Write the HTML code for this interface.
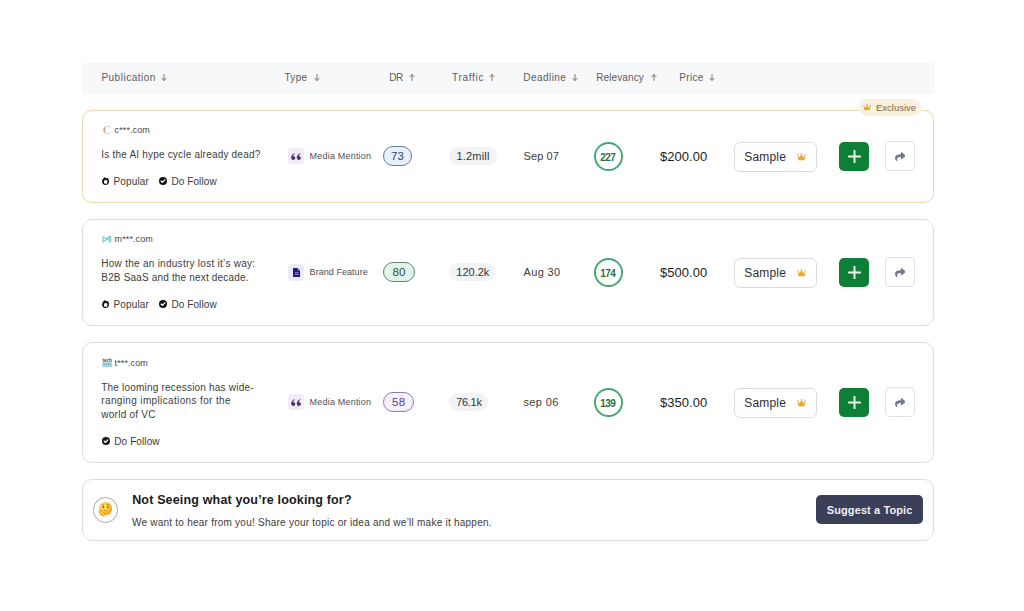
<!DOCTYPE html>
<html><head><meta charset="utf-8"><title>Publications</title>
<style>
html,body{margin:0;padding:0;background:#fff;}
body{width:1024px;height:611px;position:relative;overflow:hidden;font-family:"Liberation Sans",sans-serif;}
.t{position:absolute;white-space:nowrap;line-height:20px;height:20px;}
.b{position:absolute;}
</style></head><body>
<div class="b" style="left:82px;top:62.5px;width:852.5px;height:31px;background:#f7f8fa;border-radius:4px;"></div>
<div class="t" style="left:101.40px;top:68.44px;font-size:10px;color:#5c5c5c;letter-spacing:0.5px;">Publication</div>
<svg class="b" style="left:161.3px;top:74.0px;width:6px;height:7px" viewBox="0 0 6 7"><path d="M3 0.5V6.3M0.8 4.2L3 6.5L5.2 4.2" stroke="#6a6a6a" stroke-width="0.9" fill="none" stroke-linecap="round" stroke-linejoin="round"/></svg>
<div class="t" style="left:284.50px;top:68.44px;font-size:10px;color:#5c5c5c;letter-spacing:0.3px;">Type</div>
<svg class="b" style="left:313.5px;top:74.0px;width:6px;height:7px" viewBox="0 0 6 7"><path d="M3 0.5V6.3M0.8 4.2L3 6.5L5.2 4.2" stroke="#6a6a6a" stroke-width="0.9" fill="none" stroke-linecap="round" stroke-linejoin="round"/></svg>
<div class="t" style="left:389.20px;top:68.44px;font-size:10px;color:#5c5c5c;letter-spacing:-0.4px;">DR</div>
<svg class="b" style="left:408.5px;top:74.0px;width:6px;height:7px" viewBox="0 0 6 7"><path d="M3 6.5V0.7M0.8 2.8L3 0.5L5.2 2.8" stroke="#6a6a6a" stroke-width="0.9" fill="none" stroke-linecap="round" stroke-linejoin="round"/></svg>
<div class="t" style="left:452.00px;top:68.44px;font-size:10px;color:#5c5c5c;letter-spacing:0.7px;">Traffic</div>
<svg class="b" style="left:488.5px;top:74.0px;width:6px;height:7px" viewBox="0 0 6 7"><path d="M3 6.5V0.7M0.8 2.8L3 0.5L5.2 2.8" stroke="#6a6a6a" stroke-width="0.9" fill="none" stroke-linecap="round" stroke-linejoin="round"/></svg>
<div class="t" style="left:523.30px;top:68.44px;font-size:10px;color:#5c5c5c;letter-spacing:0.45px;">Deadline</div>
<svg class="b" style="left:572.3px;top:74.0px;width:6px;height:7px" viewBox="0 0 6 7"><path d="M3 0.5V6.3M0.8 4.2L3 6.5L5.2 4.2" stroke="#6a6a6a" stroke-width="0.9" fill="none" stroke-linecap="round" stroke-linejoin="round"/></svg>
<div class="t" style="left:596.30px;top:68.44px;font-size:10px;color:#5c5c5c;letter-spacing:0.1px;">Relevancy</div>
<svg class="b" style="left:650.8px;top:74.0px;width:6px;height:7px" viewBox="0 0 6 7"><path d="M3 6.5V0.7M0.8 2.8L3 0.5L5.2 2.8" stroke="#6a6a6a" stroke-width="0.9" fill="none" stroke-linecap="round" stroke-linejoin="round"/></svg>
<div class="t" style="left:679.20px;top:68.44px;font-size:10px;color:#5c5c5c;letter-spacing:0.35px;">Price</div>
<svg class="b" style="left:709px;top:74.0px;width:6px;height:7px" viewBox="0 0 6 7"><path d="M3 0.5V6.3M0.8 4.2L3 6.5L5.2 4.2" stroke="#6a6a6a" stroke-width="0.9" fill="none" stroke-linecap="round" stroke-linejoin="round"/></svg>
<div class="b" style="left:82px;top:110px;width:852px;height:93px;border:1px solid #ebdab5;border-radius:10px;box-sizing:border-box;background:#fff;box-shadow:0 0 1.5px rgba(238,222,170,0.6);"></div>
<div class="b" style="left:82px;top:219px;width:852px;height:107px;border:1px solid #dedede;border-radius:10px;box-sizing:border-box;background:#fff;"></div>
<div class="b" style="left:82px;top:342px;width:852px;height:121px;border:1px solid #dedede;border-radius:10px;box-sizing:border-box;background:#fff;"></div>
<div class="b" style="left:82px;top:479px;width:852px;height:62px;border:1px solid #dedede;border-radius:10px;box-sizing:border-box;background:#fff;"></div>
<div class="b" style="left:859px;top:99px;width:61.5px;height:17px;background:#f8f1df;border-radius:9px;"></div>
<svg class="b" style="left:862.8px;top:103.6px;width:8px;height:6.8px" viewBox="0 0 9 7.5"><path d="M0.9 2.2 L2.6 4.2 L4.5 0.8 L6.4 4.2 L8.1 2.2 L7.6 7.3 L1.4 7.3 Z" fill="#e6a935"/><circle cx="0.9" cy="2" r="0.8" fill="#e6a935"/><circle cx="8.1" cy="2" r="0.8" fill="#e6a935"/><circle cx="4.5" cy="0.8" r="0.8" fill="#e6a935"/></svg>
<div class="t" style="left:876.00px;top:98.31px;font-size:9.5px;color:#7b6a45;">Exclusive</div>
<svg class="b" style="left:102.5px;top:125.8px;width:8.4px;height:8.2px" viewBox="0 0 8.4 8.2"><path d="M7.3 1.3 A3.9 3.95 0 1 0 7.3 6.7" stroke="#d8b8a2" stroke-width="0.9" fill="none"/><path d="M2.4 1.6 A3.9 3.95 0 0 0 2.4 6.4" stroke="#cfa48a" stroke-width="1.3" fill="none"/></svg>
<div class="t" style="left:114.60px;top:119.78px;font-size:9px;color:#454545;letter-spacing:0.1px;">c***.com</div>
<div class="t" style="left:101.30px;top:144.84px;font-size:10px;color:#3d3d3d;letter-spacing:0.2px;">Is the AI hype cycle already dead?</div>
<svg class="b" style="left:101.8px;top:177.10000000000002px;width:7.2px;height:8px" viewBox="0 0 7.2 8"><circle cx="3.6" cy="4.4" r="3.5" fill="#111"/><path d="M1.2 2.2 L2.6 0 L4.6 1.6 Z" fill="#111"/><path d="M5.2 1.6 L6.3 0.9 L6.6 2.6 Z" fill="#111"/><circle cx="3.7" cy="4.9" r="1.85" fill="#fff"/></svg>
<div class="t" style="left:113.50px;top:172.14px;font-size:10px;color:#3a3a3a;letter-spacing:0.15px;">Popular</div>
<svg class="b" style="left:158.6px;top:176.8px;width:8px;height:8px" viewBox="0 0 8 8"><circle cx="4" cy="4" r="4" fill="#111"/><path d="M2.1 4.1L3.4 5.3L5.9 2.9" stroke="#fff" stroke-width="1.3" fill="none" stroke-linecap="round" stroke-linejoin="round"/></svg>
<div class="t" style="left:171.40px;top:172.14px;font-size:10px;color:#3a3a3a;letter-spacing:0.1px;">Do Follow</div>
<div class="b" style="left:288px;top:148px;width:16.2px;height:16px;background:#f3ecf8;border-radius:4px;"></div>
<svg class="b" style="left:291.2px;top:152.9px;width:10.2px;height:7px" viewBox="0 0 10.2 7"><path d="M0.2 4.6 C0.2 2.4 1.4 0.9 3.4 0.2 L3.8 1.1 C2.8 1.6 2.2 2.3 2.0 2.9 C3.2 2.9 4.3 3.8 4.3 4.9 C4.3 6.1 3.4 6.9 2.2 6.9 C1.0 6.9 0.2 6 0.2 4.6 Z" fill="#4d3470"/><path d="M0.2 4.6 C0.2 2.4 1.4 0.9 3.4 0.2 L3.8 1.1 C2.8 1.6 2.2 2.3 2.0 2.9 C3.2 2.9 4.3 3.8 4.3 4.9 C4.3 6.1 3.4 6.9 2.2 6.9 C1.0 6.9 0.2 6 0.2 4.6 Z" transform="translate(5.6 0)" fill="#4d3470"/></svg>
<div class="t" style="left:309.60px;top:145.98px;font-size:9px;color:#4f4f4f;letter-spacing:0.2px;">Media Mention</div>
<div class="b" style="left:383.4px;top:146.2px;width:28.2px;height:20.2px;background:#e7f0fb;border:1px solid #6b7b90;border-radius:10px;box-sizing:border-box;"></div>
<div class="t" style="left:297.50px;width:200px;text-align:center;top:146.02px;font-size:11.5px;color:#33435a;letter-spacing:0.2px;">73</div>
<div class="b" style="left:449.3px;top:146.8px;width:47.4px;height:18px;background:#f2f3f4;border-radius:9px;"></div>
<div class="t" style="left:373.00px;width:200px;text-align:center;top:146.09px;font-size:11px;color:#333;letter-spacing:0.2px;">1.2mill</div>
<div class="t" style="left:523.50px;top:146.09px;font-size:11px;color:#3a3a3a;letter-spacing:0.1px;">Sep 07</div>
<svg class="b" style="left:593.5px;top:141.8px;width:29px;height:29px" viewBox="0 0 29 29"><circle cx="14.5" cy="14.5" r="13.55" fill="none" stroke="#46a670" stroke-width="1.9"/></svg>
<div class="t" style="left:507.80px;width:200px;text-align:center;top:148.13px;font-size:10px;color:#2b6e39;font-weight:700;letter-spacing:-0.5px;">227</div>
<div class="t" style="left:660.00px;top:146.80px;font-size:13px;color:#1c1c1c;letter-spacing:0.05px;">$200.00</div>
<div class="b" style="left:733.5px;top:141.5px;width:83.2px;height:30px;border:1px solid #dcdcdc;border-radius:6px;box-sizing:border-box;background:#fff;"></div>
<div class="t" style="left:744.20px;top:146.84px;font-size:12px;color:#2e2e2e;letter-spacing:0.2px;">Sample</div>
<svg class="b" style="left:797px;top:153px;width:9px;height:7.5px" viewBox="0 0 9 7.5"><path d="M0.9 2.2 L2.6 4.2 L4.5 0.8 L6.4 4.2 L8.1 2.2 L7.6 7.3 L1.4 7.3 Z" fill="#e6a935"/><circle cx="0.9" cy="2" r="0.8" fill="#e6a935"/><circle cx="8.1" cy="2" r="0.8" fill="#e6a935"/><circle cx="4.5" cy="0.8" r="0.8" fill="#e6a935"/></svg>
<div class="b" style="left:839.2px;top:141.7px;width:29.6px;height:29.6px;background:#0d7f37;border-radius:5px;"></div>
<svg class="b" style="left:847.5px;top:150px;width:13px;height:13px" viewBox="0 0 13 13"><path d="M6.5 0.8V12.2M0.8 6.5H12.2" stroke="#e8f7ea" stroke-width="2" stroke-linecap="round"/></svg>
<div class="b" style="left:885.2px;top:141.4px;width:29.6px;height:29.8px;border:1px solid #dfdfe4;border-radius:5px;box-sizing:border-box;background:#fff;"></div>
<svg class="b" style="left:894.8px;top:151.7px;width:10.7px;height:9.3px" viewBox="0 31 512 451"><path d="M503.691 189.836L327.687 37.851C312.281 24.546 288 35.347 288 56.015v80.053C127.371 137.907 0 170.1 0 322.326c0 61.441 39.581 122.309 83.333 154.132 13.653 9.931 33.111-2.533 28.077-18.631C66.066 312.814 132.917 274.316 288 272.085V360c0 20.7 24.3 31.453 39.687 18.164l176.004-152c11.071-9.562 11.086-26.753 0-36.328z" fill="#737790"/></svg>
<svg class="b" style="left:102px;top:236.2px;width:9.7px;height:6.6px" viewBox="0 0 9.7 6.6"><rect x="0.3" y="0" width="1.5" height="6.6" rx="0.5" fill="#86dcc4"/><path d="M1.1 0.5 L4.9 3.4 L1.1 6.1" stroke="#79cfc0" stroke-width="1.2" fill="none"/><path d="M4.9 3.4 L7.4 0.6" stroke="#68c2dc" stroke-width="1.5" fill="none"/><rect x="6.6" y="0" width="2.8" height="6.6" rx="0.8" fill="#8ad6d4"/></svg>
<div class="t" style="left:114.60px;top:229.28px;font-size:9px;color:#454545;letter-spacing:0.1px;">m***.com</div>
<div class="t" style="left:101.30px;top:254.34px;font-size:10px;color:#3d3d3d;letter-spacing:0.27px;">How the an industry lost it’s way:</div>
<div class="t" style="left:101.30px;top:267.84px;font-size:10px;color:#3d3d3d;letter-spacing:0.17px;">B2B SaaS and the next decade.</div>
<svg class="b" style="left:101.8px;top:299.90000000000003px;width:7.2px;height:8px" viewBox="0 0 7.2 8"><circle cx="3.6" cy="4.4" r="3.5" fill="#111"/><path d="M1.2 2.2 L2.6 0 L4.6 1.6 Z" fill="#111"/><path d="M5.2 1.6 L6.3 0.9 L6.6 2.6 Z" fill="#111"/><circle cx="3.7" cy="4.9" r="1.85" fill="#fff"/></svg>
<div class="t" style="left:113.50px;top:294.94px;font-size:10px;color:#3a3a3a;letter-spacing:0.15px;">Popular</div>
<svg class="b" style="left:158.6px;top:299.6px;width:8px;height:8px" viewBox="0 0 8 8"><circle cx="4" cy="4" r="4" fill="#111"/><path d="M2.1 4.1L3.4 5.3L5.9 2.9" stroke="#fff" stroke-width="1.3" fill="none" stroke-linecap="round" stroke-linejoin="round"/></svg>
<div class="t" style="left:171.40px;top:294.94px;font-size:10px;color:#3a3a3a;letter-spacing:0.1px;">Do Follow</div>
<div class="b" style="left:288px;top:264px;width:16.2px;height:16.5px;background:#ebeafb;border-radius:4px;"></div>
<svg class="b" style="left:292.8px;top:267.9px;width:7.2px;height:9px" viewBox="0 0 7.2 9"><path d="M0 0.6 Q0 0 0.6 0 H4.6 L7.2 2.6 V8.4 Q7.2 9 6.6 9 H0.6 Q0 9 0 8.4Z" fill="#201b7c"/><path d="M4.6 0 V2.6 H7.2" fill="#8c88d8"/><rect x="1.8" y="4.3" width="3.8" height="0.9" fill="#9a97e0"/><rect x="1.8" y="6" width="3.8" height="0.9" fill="#9a97e0"/></svg>
<div class="t" style="left:309.60px;top:261.98px;font-size:9px;color:#4f4f4f;letter-spacing:0.05px;">Brand Feature</div>
<div class="b" style="left:383.4px;top:262.2px;width:31.2px;height:20.2px;background:#e2f5e9;border:1px solid #6e8074;border-radius:10px;box-sizing:border-box;"></div>
<div class="t" style="left:299.00px;width:200px;text-align:center;top:262.02px;font-size:11.5px;color:#2f4f3a;letter-spacing:0.2px;">80</div>
<div class="b" style="left:449.3px;top:262.8px;width:47px;height:18px;background:#f2f3f4;border-radius:9px;"></div>
<div class="t" style="left:372.80px;width:200px;text-align:center;top:262.09px;font-size:11px;color:#333;">120.2k</div>
<div class="t" style="left:523.50px;top:262.09px;font-size:11px;color:#3a3a3a;letter-spacing:0.35px;">Aug 30</div>
<svg class="b" style="left:593.5px;top:257.8px;width:29px;height:29px" viewBox="0 0 29 29"><circle cx="14.5" cy="14.5" r="13.55" fill="none" stroke="#46a670" stroke-width="1.9"/></svg>
<div class="t" style="left:507.80px;width:200px;text-align:center;top:264.14px;font-size:10px;color:#2b6e39;font-weight:700;letter-spacing:-0.5px;">174</div>
<div class="t" style="left:660.00px;top:262.80px;font-size:13px;color:#1c1c1c;letter-spacing:0.05px;">$500.00</div>
<div class="b" style="left:733.5px;top:257.5px;width:83.2px;height:30px;border:1px solid #dcdcdc;border-radius:6px;box-sizing:border-box;background:#fff;"></div>
<div class="t" style="left:744.20px;top:262.84px;font-size:12px;color:#2e2e2e;letter-spacing:0.2px;">Sample</div>
<svg class="b" style="left:797px;top:269px;width:9px;height:7.5px" viewBox="0 0 9 7.5"><path d="M0.9 2.2 L2.6 4.2 L4.5 0.8 L6.4 4.2 L8.1 2.2 L7.6 7.3 L1.4 7.3 Z" fill="#e6a935"/><circle cx="0.9" cy="2" r="0.8" fill="#e6a935"/><circle cx="8.1" cy="2" r="0.8" fill="#e6a935"/><circle cx="4.5" cy="0.8" r="0.8" fill="#e6a935"/></svg>
<div class="b" style="left:839.2px;top:257.7px;width:29.6px;height:29.6px;background:#0d7f37;border-radius:5px;"></div>
<svg class="b" style="left:847.5px;top:266px;width:13px;height:13px" viewBox="0 0 13 13"><path d="M6.5 0.8V12.2M0.8 6.5H12.2" stroke="#e8f7ea" stroke-width="2" stroke-linecap="round"/></svg>
<div class="b" style="left:885.2px;top:257.4px;width:29.6px;height:29.8px;border:1px solid #dfdfe4;border-radius:5px;box-sizing:border-box;background:#fff;"></div>
<svg class="b" style="left:894.8px;top:267.7px;width:10.7px;height:9.3px" viewBox="0 31 512 451"><path d="M503.691 189.836L327.687 37.851C312.281 24.546 288 35.347 288 56.015v80.053C127.371 137.907 0 170.1 0 322.326c0 61.441 39.581 122.309 83.333 154.132 13.653 9.931 33.111-2.533 28.077-18.631C66.066 312.814 132.917 274.316 288 272.085V360c0 20.7 24.3 31.453 39.687 18.164l176.004-152c11.071-9.562 11.086-26.753 0-36.328z" fill="#737790"/></svg>
<svg class="b" style="left:101.5px;top:357.6px;width:10.6px;height:9.6px" viewBox="0 0 10.6 9.6"><text x="5.2" y="3.5" font-size="4.9" font-weight="700" text-anchor="middle" fill="#4a4a4a" font-family="Liberation Sans" letter-spacing="-0.1">tech</text><rect x="0.3" y="4.3" width="10" height="5" rx="0.7" fill="#acdcee"/><rect x="1.0" y="5.4" width="8.6" height="1.1" fill="#6fb2c6"/><rect x="1.0" y="7.5" width="8.6" height="0.8" fill="#8cc6d8"/></svg>
<div class="t" style="left:114.60px;top:352.88px;font-size:9px;color:#454545;letter-spacing:0.1px;">t***.com</div>
<div class="t" style="left:101.30px;top:377.64px;font-size:10px;color:#3d3d3d;letter-spacing:0.2px;">The looming recession has wide-</div>
<div class="t" style="left:101.30px;top:391.14px;font-size:10px;color:#3d3d3d;letter-spacing:0.36px;">ranging implications for the</div>
<div class="t" style="left:101.30px;top:404.64px;font-size:10px;color:#3d3d3d;letter-spacing:0.25px;">world of VC</div>
<svg class="b" style="left:101.7px;top:436.8px;width:8px;height:8px" viewBox="0 0 8 8"><circle cx="4" cy="4" r="4" fill="#111"/><path d="M2.1 4.1L3.4 5.3L5.9 2.9" stroke="#fff" stroke-width="1.3" fill="none" stroke-linecap="round" stroke-linejoin="round"/></svg>
<div class="t" style="left:114.30px;top:432.14px;font-size:10px;color:#3a3a3a;letter-spacing:0.1px;">Do Follow</div>
<div class="b" style="left:288px;top:394px;width:16.2px;height:16px;background:#f3ecf8;border-radius:4px;"></div>
<svg class="b" style="left:291.2px;top:398.9px;width:10.2px;height:7px" viewBox="0 0 10.2 7"><path d="M0.2 4.6 C0.2 2.4 1.4 0.9 3.4 0.2 L3.8 1.1 C2.8 1.6 2.2 2.3 2.0 2.9 C3.2 2.9 4.3 3.8 4.3 4.9 C4.3 6.1 3.4 6.9 2.2 6.9 C1.0 6.9 0.2 6 0.2 4.6 Z" fill="#4d3470"/><path d="M0.2 4.6 C0.2 2.4 1.4 0.9 3.4 0.2 L3.8 1.1 C2.8 1.6 2.2 2.3 2.0 2.9 C3.2 2.9 4.3 3.8 4.3 4.9 C4.3 6.1 3.4 6.9 2.2 6.9 C1.0 6.9 0.2 6 0.2 4.6 Z" transform="translate(5.6 0)" fill="#4d3470"/></svg>
<div class="t" style="left:309.60px;top:391.98px;font-size:9px;color:#4f4f4f;letter-spacing:0.2px;">Media Mention</div>
<div class="b" style="left:383.4px;top:392.2px;width:30.6px;height:20.2px;background:#f5f0fc;border:1px solid #8f7ab8;border-radius:10px;box-sizing:border-box;"></div>
<div class="t" style="left:298.70px;width:200px;text-align:center;top:392.02px;font-size:11.5px;color:#5b4290;letter-spacing:0.2px;">58</div>
<div class="b" style="left:449.3px;top:392.8px;width:39.2px;height:18px;background:#f2f3f4;border-radius:9px;"></div>
<div class="t" style="left:368.90px;width:200px;text-align:center;top:392.09px;font-size:11px;color:#333;letter-spacing:-0.3px;">76.1k</div>
<div class="t" style="left:523.50px;top:392.09px;font-size:11px;color:#3a3a3a;letter-spacing:0.35px;">sep 06</div>
<svg class="b" style="left:593.5px;top:387.8px;width:29px;height:29px" viewBox="0 0 29 29"><circle cx="14.5" cy="14.5" r="13.55" fill="none" stroke="#46a670" stroke-width="1.9"/></svg>
<div class="t" style="left:507.80px;width:200px;text-align:center;top:394.14px;font-size:10px;color:#2b6e39;font-weight:700;letter-spacing:-0.5px;">139</div>
<div class="t" style="left:660.00px;top:392.80px;font-size:13px;color:#1c1c1c;letter-spacing:0.05px;">$350.00</div>
<div class="b" style="left:733.5px;top:387.5px;width:83.2px;height:30px;border:1px solid #dcdcdc;border-radius:6px;box-sizing:border-box;background:#fff;"></div>
<div class="t" style="left:744.20px;top:392.84px;font-size:12px;color:#2e2e2e;letter-spacing:0.2px;">Sample</div>
<svg class="b" style="left:797px;top:399px;width:9px;height:7.5px" viewBox="0 0 9 7.5"><path d="M0.9 2.2 L2.6 4.2 L4.5 0.8 L6.4 4.2 L8.1 2.2 L7.6 7.3 L1.4 7.3 Z" fill="#e6a935"/><circle cx="0.9" cy="2" r="0.8" fill="#e6a935"/><circle cx="8.1" cy="2" r="0.8" fill="#e6a935"/><circle cx="4.5" cy="0.8" r="0.8" fill="#e6a935"/></svg>
<div class="b" style="left:839.2px;top:387.7px;width:29.6px;height:29.6px;background:#0d7f37;border-radius:5px;"></div>
<svg class="b" style="left:847.5px;top:396px;width:13px;height:13px" viewBox="0 0 13 13"><path d="M6.5 0.8V12.2M0.8 6.5H12.2" stroke="#e8f7ea" stroke-width="2" stroke-linecap="round"/></svg>
<div class="b" style="left:885.2px;top:387.4px;width:29.6px;height:29.8px;border:1px solid #dfdfe4;border-radius:5px;box-sizing:border-box;background:#fff;"></div>
<svg class="b" style="left:894.8px;top:397.7px;width:10.7px;height:9.3px" viewBox="0 31 512 451"><path d="M503.691 189.836L327.687 37.851C312.281 24.546 288 35.347 288 56.015v80.053C127.371 137.907 0 170.1 0 322.326c0 61.441 39.581 122.309 83.333 154.132 13.653 9.931 33.111-2.533 28.077-18.631C66.066 312.814 132.917 274.316 288 272.085V360c0 20.7 24.3 31.453 39.687 18.164l176.004-152c11.071-9.562 11.086-26.753 0-36.328z" fill="#737790"/></svg>
<div class="b" style="left:92.6px;top:497px;width:25.6px;height:25.6px;border:1px solid #a8a8a8;border-radius:50%;box-sizing:border-box;background:#fff;"></div>
<svg class="b" style="left:98px;top:502.4px;width:14.4px;height:14.4px" viewBox="0 0 14.4 14.4"><defs><radialGradient id="eg" cx="0.4" cy="0.35" r="0.7"><stop offset="0" stop-color="#ffe36e"/><stop offset="0.6" stop-color="#f9c02a"/><stop offset="1" stop-color="#f0961c"/></radialGradient></defs><circle cx="7.6" cy="6.6" r="6.5" fill="url(#eg)"/><ellipse cx="5.4" cy="5" rx="0.75" ry="1" fill="#6b4a1c"/><ellipse cx="9.8" cy="5" rx="0.75" ry="1" fill="#6b4a1c"/><path d="M3.8 3.4 Q5 2.4 6.3 2.9 M8.8 2.6 Q10 2.2 11.2 3" stroke="#8a5a1c" stroke-width="0.6" fill="none"/><path d="M6.4 8.6 Q7.6 8.2 8.8 8.6" stroke="#a0601c" stroke-width="0.6" fill="none"/><path d="M0.9 9.4 Q1.4 13.2 4.6 14 Q7.4 14.2 7.4 12.4 Q7 11.2 5.4 10.8 Q4.2 9.8 3.6 8.6 Q2.2 8 0.9 9.4 Z" fill="#fbbf3a" stroke="#e48a16" stroke-width="0.5"/></svg>
<div class="t" style="left:132.20px;top:489.77px;font-size:12.5px;color:#1a1a1a;font-weight:700;letter-spacing:0.16px;">Not Seeing what you’re looking for?</div>
<div class="t" style="left:131.90px;top:512.63px;font-size:10px;color:#3c3c3c;letter-spacing:0.24px;">We want to hear from you! Share your topic or idea and we’ll make it happen.</div>
<div class="b" style="left:815.9px;top:494.8px;width:107px;height:29.6px;background:#3c3f58;border-radius:5px;"></div>
<div class="t" style="left:769.60px;width:200px;text-align:center;top:500.19px;font-size:11px;color:#eef0f6;font-weight:700;letter-spacing:0.1px;">Suggest a Topic</div>
</body></html>
